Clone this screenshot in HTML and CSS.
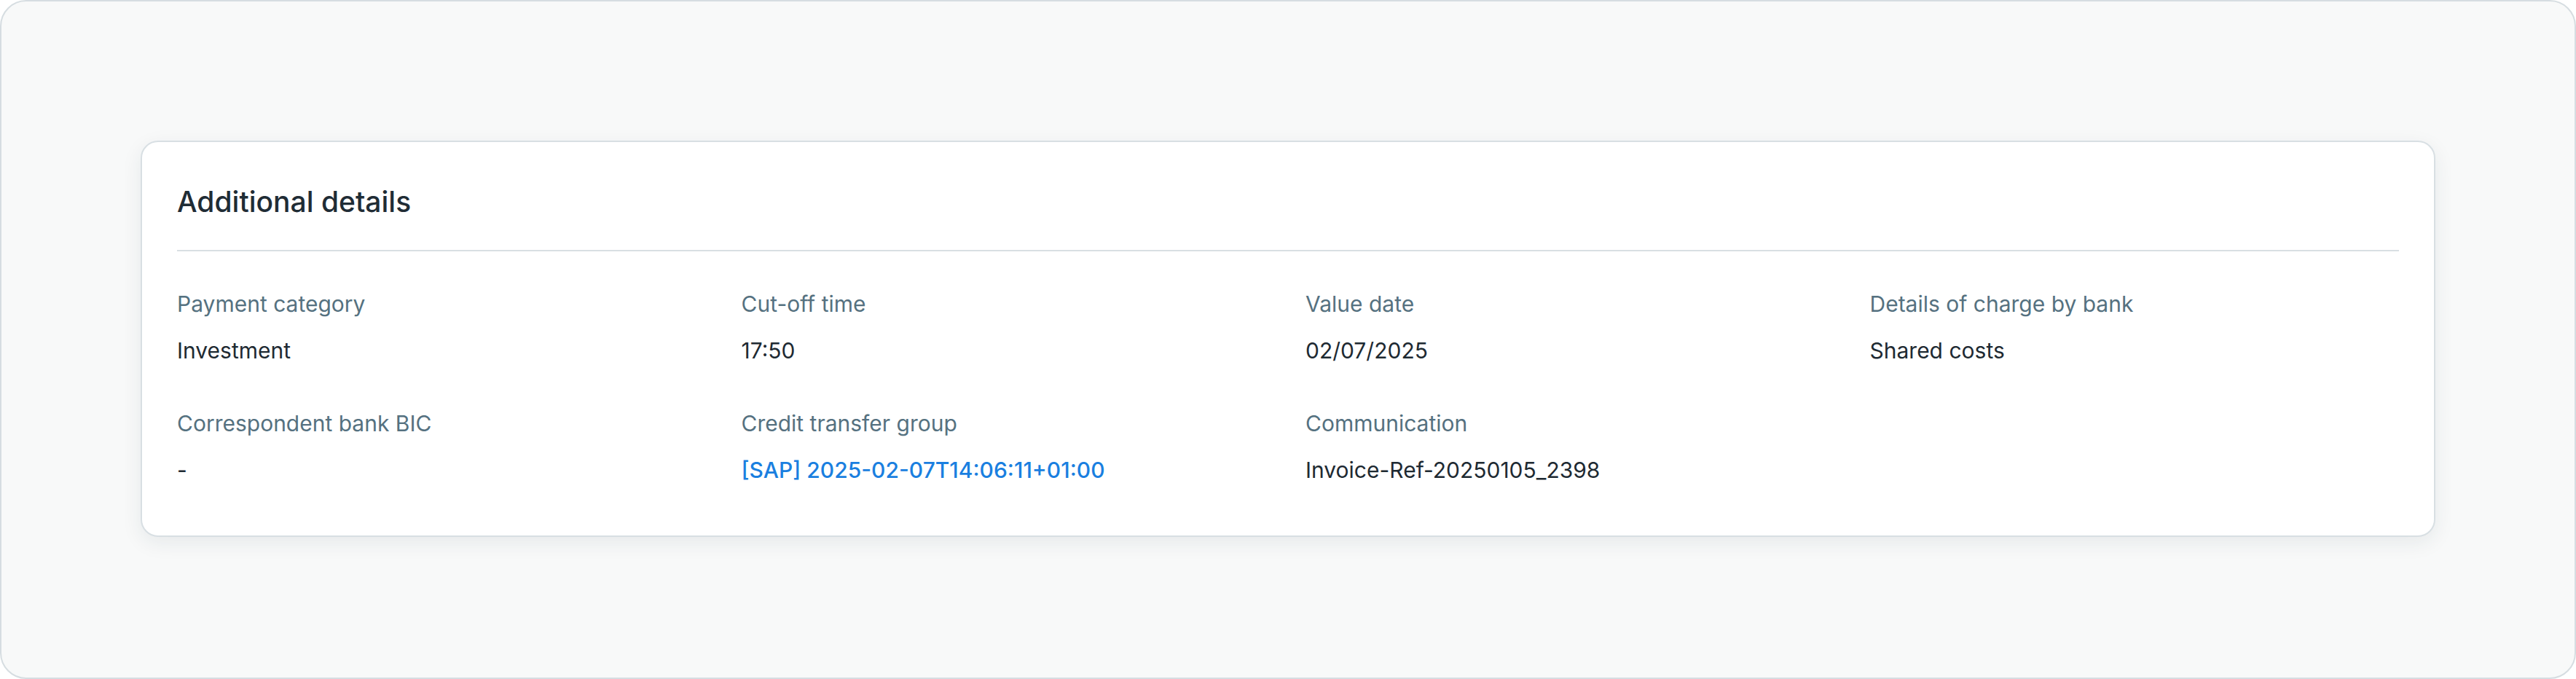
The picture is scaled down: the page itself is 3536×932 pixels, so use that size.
FILE: index.html
```html
<!DOCTYPE html>
<html lang="en">
<head>
<meta charset="utf-8">
<title>Additional details</title>
<link rel="stylesheet" href="styles.css">
</head>
<body>
<div class="frame">
  <section class="card">
    <header class="card-header">
      <h2 class="card-title">Additional details</h2>
    </header>
    <dl class="details">
      <div class="item">
        <dt class="label">Payment category</dt>
        <dd class="value">Investment</dd>
      </div>
      <div class="item">
        <dt class="label">Cut-off time</dt>
        <dd class="value">17:50</dd>
      </div>
      <div class="item">
        <dt class="label">Value date</dt>
        <dd class="value">02/07/2025</dd>
      </div>
      <div class="item">
        <dt class="label">Details of charge by bank</dt>
        <dd class="value">Shared costs</dd>
      </div>
      <div class="item">
        <dt class="label">Correspondent bank BIC</dt>
        <dd class="value">-</dd>
      </div>
      <div class="item">
        <dt class="label">Credit transfer group</dt>
        <dd class="value"><a class="link" href="#">[SAP] 2025-02-07T14:06:11+01:00</a></dd>
      </div>
      <div class="item">
        <dt class="label">Communication</dt>
        <dd class="value">Invoice-Ref-20250105_2398</dd>
      </div>
    </dl>
  </section>
</div>
</body>
</html>
```
FILE: styles.css
```css
* { box-sizing: border-box; }
html, body {
  margin: 0;
  padding: 0;
  background: #ffffff;
}
body {
  font-family: Inter, "Noto Sans", "Liberation Sans", sans-serif;
  color: #1e2a32;
}
.frame {
  width: 3536px;
  height: 932px;
  background: #f8f9f9;
  border: 2px solid #d6dde1;
  border-radius: 36px;
  padding: 191px;
}
.card {
  background: #ffffff;
  border: 2px solid #d8dfe3;
  border-radius: 24px;
  padding: 54px 48px 68px;
  box-shadow: 0 8px 28px rgba(30, 50, 60, 0.08);
}
.card-header {
  padding-bottom: 38px;
  border-bottom: 2px solid #d8dfe3;
}
.card-title {
  margin: 0;
  font-size: 39px;
  line-height: 56px;
  font-weight: 450;
  color: #1f2c35;
}
.details {
  margin: 50px 0 0;
  display: grid;
  grid-template-columns: repeat(4, 1fr);
  column-gap: 48px;
  row-gap: 56px;
}
.item {
  display: flex;
  flex-direction: column;
  gap: 20px;
}
.label {
  font-size: 30px;
  line-height: 44px;
  color: #557180;
}
.value {
  margin: 0;
  font-size: 30px;
  line-height: 44px;
  color: #1e2a32;
}
.link {
  color: #1a7fe0;
  font-weight: 500;
  text-decoration: none;
}
```
